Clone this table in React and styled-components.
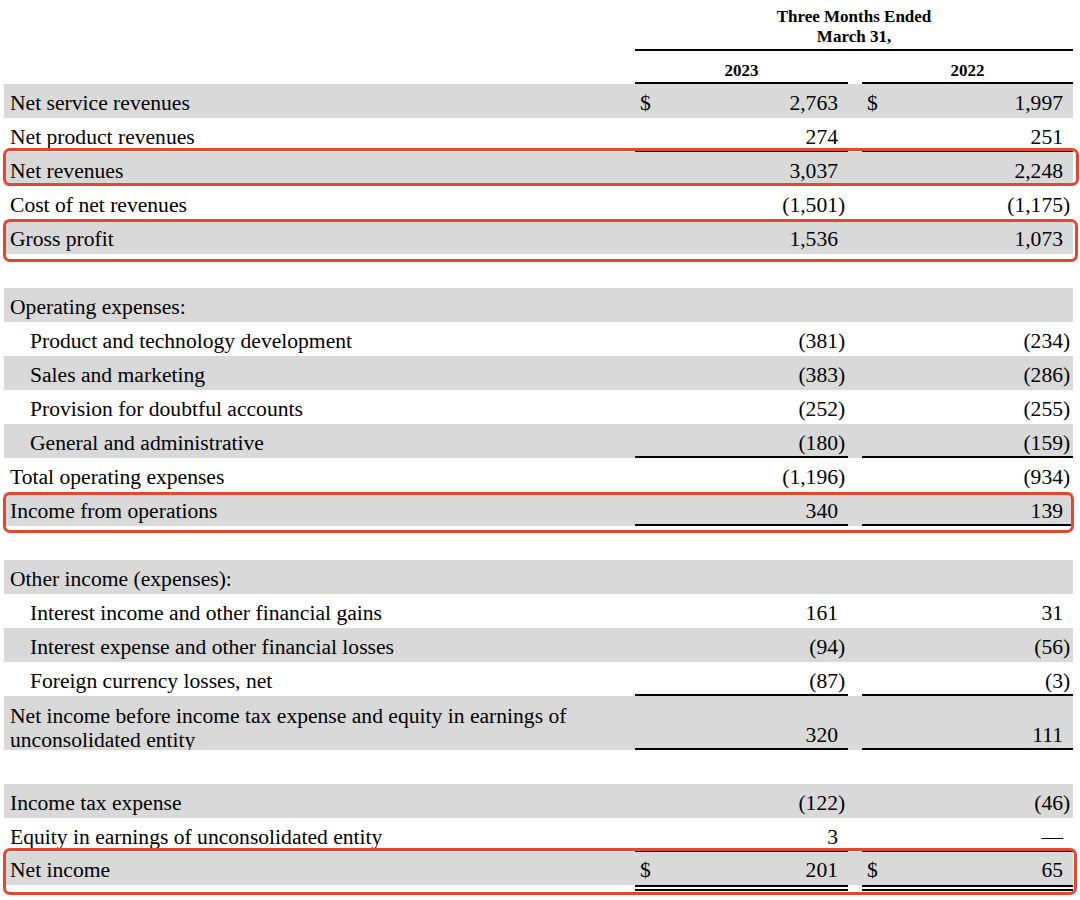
import React from 'react';
import styled, { createGlobalStyle, css } from 'styled-components';

const Global = createGlobalStyle`
  html, body { margin: 0; padding: 0; background: #fff; }
  body {
    font-family: "Liberation Serif", "Times New Roman", serif;
    color: #000;
  }
`;

/* label | 2023 | gutter | 2022 */
const COLS = '631px 213px 14px 211px';

const Page = styled.div`
  width: 1080px;
  height: 900px;
  box-sizing: border-box;
  padding: 7px 0 0 4px;
  overflow: hidden;
`;

const Table = styled.div`
  width: 1069px;
  display: flex;
  flex-direction: column;
`;

const HeadRow = styled.div`
  display: grid;
  grid-template-columns: ${COLS};
  font-size: 17px;
  font-weight: 700;
`;

const Period = styled.div`
  grid-column: 2 / 5;
  text-align: center;
  line-height: 20px;
  padding-bottom: 2px;
  border-bottom: 2px solid #000;
`;

const Year = styled.div`
  grid-column: ${(p) => p.$col};
  height: 33px;
  box-sizing: border-box;
  display: flex;
  align-items: flex-end;
  justify-content: center;
  line-height: 1.15;
  padding-bottom: 1px;
  border-bottom: 2px solid #000;
`;

const Row = styled.div`
  display: grid;
  grid-template-columns: ${COLS};
  height: ${(p) => p.$h}px;
  background: ${(p) => (p.$shade ? '#d9d9d9' : 'transparent')};
  font-size: 21.6px;
  line-height: 1.15;
  ${(p) =>
    p.$mark &&
    css`
      position: relative;
      &::after {
        content: '';
        position: absolute;
        pointer-events: none;
        left: -1px;
        right: ${-p.$mark.r}px;
        top: ${-p.$mark.t}px;
        bottom: ${-p.$mark.b}px;
        border: 3px solid #e2482f;
        border-radius: 7px;
      }
    `}
`;

const Label = styled.div`
  grid-column: 1;
  display: flex;
  align-items: ${(p) => (p.$wrap ? 'flex-start' : 'flex-end')};
  padding: ${(p) => (p.$wrap ? '8px' : '0')} 40px 2px ${(p) => (p.$indent ? 26 : 6)}px;
  line-height: ${(p) => (p.$wrap ? '24px' : '1.15')};
  overflow: hidden;
  white-space: ${(p) => (p.$wrap ? 'normal' : 'nowrap')};
`;

const Amount = styled.div`
  grid-column: ${(p) => p.$col};
  display: flex;
  align-items: flex-end;
  box-sizing: border-box;
  padding: 0 10px ${(p) => (p.$rule ? 0 : 2)}px 5px;
  border-bottom: ${(p) => (p.$rule ? '2px solid #000' : '0')};
  white-space: nowrap;
`;

const Currency = styled.span``;

const Figure = styled.span`
  margin-left: auto;
`;

const Close = styled.span`
  margin-right: -0.333em;
`;

const RuleRow = styled.div`
  display: grid;
  grid-template-columns: ${COLS};
  height: 8px;
`;

const DoubleRule = styled.div`
  grid-column: ${(p) => p.$col};
  border-top: 6px double #000;
`;

const Value = ({ v }) => {
  if (v && v.startsWith('(')) {
    return (
      <Figure>
        {v.slice(0, -1)}
        <Close>)</Close>
      </Figure>
    );
  }
  return <Figure>{v}</Figure>;
};

const rows = [
  { label: 'Net service revenues', shade: true, a: '2,763', b: '1,997', dollar: true },
  { label: 'Net product revenues', a: '274', b: '251', rule: true },
  { label: 'Net revenues', shade: true, a: '3,037', b: '2,248', mark: { t: 4, b: 0, r: 6 } },
  { label: 'Cost of net revenues', a: '(1,501)', b: '(1,175)' },
  { label: 'Gross profit', shade: true, a: '1,536', b: '1,073', mark: { t: 1, b: 8, r: 5 } },
  { blank: true },
  { label: 'Operating expenses:', shade: true },
  { label: 'Product and technology development', indent: true, a: '(381)', b: '(234)' },
  { label: 'Sales and marketing', indent: true, shade: true, a: '(383)', b: '(286)' },
  { label: 'Provision for doubtful accounts', indent: true, a: '(252)', b: '(255)' },
  { label: 'General and administrative', indent: true, shade: true, a: '(180)', b: '(159)', rule: true },
  { label: 'Total operating expenses', a: '(1,196)', b: '(934)' },
  { label: 'Income from operations', shade: true, a: '340', b: '139', rule: true, mark: { t: 0, b: 7, r: 1 } },
  { blank: true },
  { label: 'Other income (expenses):', shade: true },
  { label: 'Interest income and other financial gains', indent: true, a: '161', b: '31' },
  { label: 'Interest expense and other financial losses', indent: true, shade: true, a: '(94)', b: '(56)' },
  { label: 'Foreign currency losses, net', indent: true, a: '(87)', b: '(3)', rule: true },
  {
    label: 'Net income before income tax expense and equity in earnings of unconsolidated entity',
    shade: true,
    h: 54,
    wrap: true,
    a: '320',
    b: '111',
    rule: true,
  },
  { blank: true },
  { label: 'Income tax expense', shade: true, a: '(122)', b: '(46)' },
  { label: 'Equity in earnings of unconsolidated entity', a: '3', b: '—', rule: true },
  { label: 'Net income', shade: true, h: 33, a: '201', b: '65', dollar: true, mark: { t: 4, b: 10, r: 4 } },
];

export default function App() {
  return (
    <Page>
      <Global />
      <Table>
        <HeadRow>
          <Period>
            Three Months Ended
            <br />
            March 31,
          </Period>
        </HeadRow>
        <HeadRow>
          <Year $col={2}>2023</Year>
          <Year $col={4}>2022</Year>
        </HeadRow>
        {rows.map((r, i) =>
          r.blank ? (
            <Row key={i} $h={34} />
          ) : (
            <Row key={i} $h={r.h || 34} $shade={r.shade} $mark={r.mark}>
              <Label $indent={r.indent} $wrap={r.wrap}>
                {r.label}
              </Label>
              <Amount $col={2} $rule={r.rule}>
                {r.dollar && <Currency>$</Currency>}
                {r.a && <Value v={r.a} />}
              </Amount>
              <Amount $col={4} $rule={r.rule}>
                {r.dollar && <Currency>$</Currency>}
                {r.b && <Value v={r.b} />}
              </Amount>
            </Row>
          )
        )}
        <RuleRow>
          <DoubleRule $col={2} />
          <DoubleRule $col={4} />
        </RuleRow>
      </Table>
    </Page>
  );
}
